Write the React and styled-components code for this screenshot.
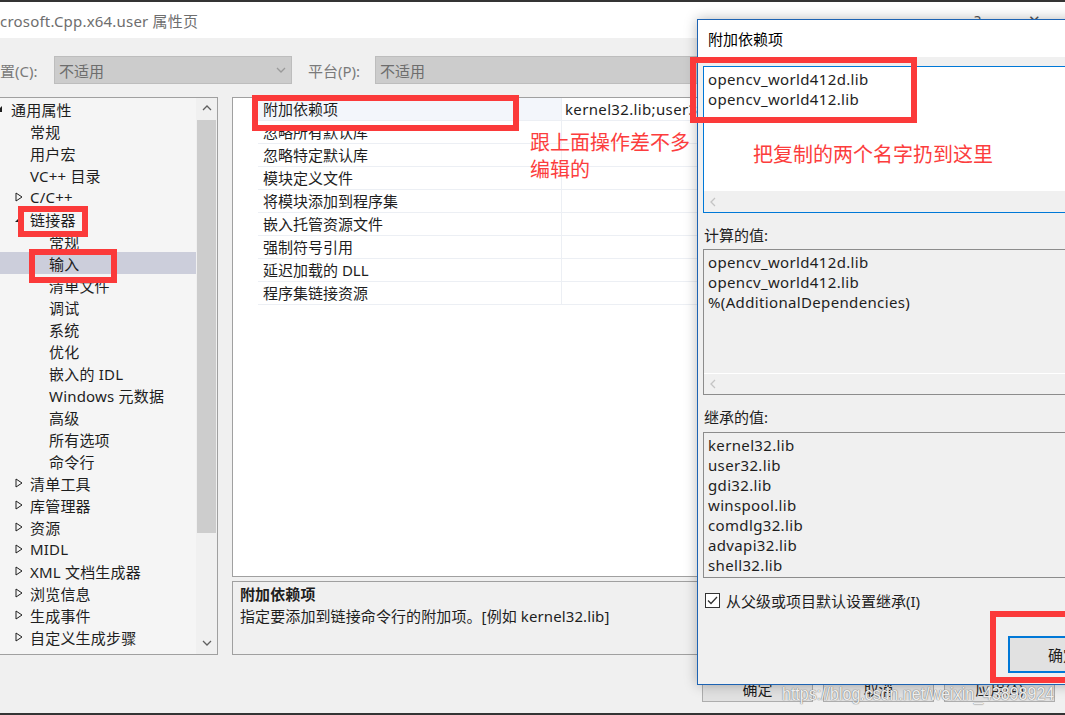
import React from "react";
import styled, { createGlobalStyle } from "styled-components";

const GlobalStyle = createGlobalStyle`
  html, body {
    margin: 0;
    padding: 0;
  }
  body {
    background: #2d2d30;
    overflow: hidden;
    font-family: "Noto Sans", "Noto Sans CJK SC", sans-serif;
  }
`;

const treeItems = [
  { label: "通用属性", level: 0, state: "open" },
  { label: "常规", level: 1 },
  { label: "用户宏", level: 1 },
  { label: "VC++ 目录", level: 1 },
  { label: "C/C++", level: 1, state: "closed" },
  { label: "链接器", level: 1, state: "open" },
  { label: "常规", level: 2 },
  { label: "输入", level: 2, selected: true },
  { label: "清单文件", level: 2 },
  { label: "调试", level: 2 },
  { label: "系统", level: 2 },
  { label: "优化", level: 2 },
  { label: "嵌入的 IDL", level: 2 },
  { label: "Windows 元数据", level: 2 },
  { label: "高级", level: 2 },
  { label: "所有选项", level: 2 },
  { label: "命令行", level: 2 },
  { label: "清单工具", level: 1, state: "closed" },
  { label: "库管理器", level: 1, state: "closed" },
  { label: "资源", level: 1, state: "closed" },
  { label: "MIDL", level: 1, state: "closed" },
  { label: "XML 文档生成器", level: 1, state: "closed" },
  { label: "浏览信息", level: 1, state: "closed" },
  { label: "生成事件", level: 1, state: "closed" },
  { label: "自定义生成步骤", level: 1, state: "closed" },
];

const gridRows = [
  { name: "附加依赖项", value: "kernel32.lib;user32.lib;gdi32.lib;winspool.lib", active: true },
  { name: "忽略所有默认库" },
  { name: "忽略特定默认库" },
  { name: "模块定义文件" },
  { name: "将模块添加到程序集" },
  { name: "嵌入托管资源文件" },
  { name: "强制符号引用" },
  { name: "延迟加载的 DLL" },
  { name: "程序集链接资源" },
];

const ownLibs = ["opencv_world412d.lib", "opencv_world412.lib"];
const computedLibs = [...ownLibs, "%(AdditionalDependencies)"];
const inheritedLibs = [
  "kernel32.lib",
  "user32.lib",
  "gdi32.lib",
  "winspool.lib",
  "comdlg32.lib",
  "advapi32.lib",
  "shell32.lib",
];

const ExpandedArrow = () => (
  <svg width="6" height="6" viewBox="0 0 6 6">
    <polygon points="6,0 6,6 0,6" fill="#1e1e1e" />
  </svg>
);

const CollapsedArrow = () => (
  <svg width="8" height="10" viewBox="0 0 8 10">
    <polygon points="1,1 7,5 1,9" fill="none" stroke="#1e1e1e" strokeWidth="1" />
  </svg>
);

const Chevron = ({ dir, color = "#606060", size = 10 }) => {
  const pts = {
    up: "1,6 5,2 9,6",
    down: "1,3 5,7 9,3",
    left: "6,1 2,5 6,9",
  }[dir];
  return (
    <svg width={size} height={size} viewBox="0 0 10 10">
      <polyline points={pts} fill="none" stroke={color} strokeWidth="1.3" />
    </svg>
  );
};

const CheckMark = () => (
  <svg width="13" height="13" viewBox="0 0 13 13">
    <polyline points="2,6.5 5,9.5 11,3" fill="none" stroke="#333" strokeWidth="1.3" />
  </svg>
);

export default function App() {
  return (
    <>
      <GlobalStyle />
      <Screen>
        <MainWindow>
          <TitleBar>
            <WindowTitle>crosoft.Cpp.x64.user 属性页</WindowTitle>
            <TitleButton>?</TitleButton>
            <TitleButton>✕</TitleButton>
          </TitleBar>

          <ConfigRow>
            <FieldLabel $w={54}>置(C):</FieldLabel>
            <Combo $w={238}>
              不适用
              <Chevron dir="down" color="#9a9a9a" />
            </Combo>
            <FieldLabel $w={67} $gap={16}>
              平台(P):
            </FieldLabel>
            <Combo $w={690}>
              不适用
              <Chevron dir="down" color="#9a9a9a" />
            </Combo>
          </ConfigRow>

          <Content>
            <Tree>
              <TreeList>
                {treeItems.map((item, i) => (
                  <TreeRow key={i} $level={item.level} $selected={item.selected}>
                    <Expander>
                      {item.state === "open" && <ExpandedArrow />}
                      {item.state === "closed" && <CollapsedArrow />}
                    </Expander>
                    {item.label}
                  </TreeRow>
                ))}
              </TreeList>
              <VScroll>
                <ScrollButton>
                  <Chevron dir="up" />
                </ScrollButton>
                <Thumb />
                <ScrollTrack />
                <ScrollButton>
                  <Chevron dir="down" />
                </ScrollButton>
              </VScroll>
            </Tree>

            <RightColumn>
              <Grid>
                {gridRows.map((row, i) => (
                  <GridRow key={i}>
                    <NameCell $active={row.active}>{row.name}</NameCell>
                    <ValueCell>{row.value}</ValueCell>
                  </GridRow>
                ))}
              </Grid>
              <Description>
                <DescTitle>附加依赖项</DescTitle>
                <div>指定要添加到链接命令行的附加项。[例如 kernel32.lib]</div>
              </Description>
            </RightColumn>
          </Content>

          <ButtonRow>
            <Button>确定</Button>
            <Button>取消</Button>
            <Button>应用(A)</Button>
          </ButtonRow>
        </MainWindow>

        <Dialog>
          <DialogTitle>附加依赖项</DialogTitle>
          <DialogBody>
            <TextBox $h={147} $focused>
              <Lines>
                {ownLibs.map((l) => (
                  <div key={l}>{l}</div>
                ))}
              </Lines>
              <HScroll $light>
                <Chevron dir="left" color="#c4c4c4" />
              </HScroll>
            </TextBox>

            <BoxLabel>计算的值:</BoxLabel>
            <TextBox $h={146}>
              <Lines>
                {computedLibs.map((l) => (
                  <div key={l}>{l}</div>
                ))}
              </Lines>
              <HScroll>
                <Chevron dir="left" color="#c4c4c4" />
              </HScroll>
            </TextBox>

            <BoxLabel $after={5}>继承的值:</BoxLabel>
            <TextBox $h={146}>
              <Lines>
                {inheritedLibs.map((l) => (
                  <div key={l}>{l}</div>
                ))}
              </Lines>
            </TextBox>

            <CheckRow>
              <CheckBox>
                <CheckMark />
              </CheckBox>
              从父级或项目默认设置继承(I)
            </CheckRow>

            <DialogFooter>
              <Button $primary $w={110} $h={37}>
                确定
              </Button>
              <Button $w={110} $h={37}>
                取消
              </Button>
            </DialogFooter>
          </DialogBody>
        </Dialog>

        <RedBox $x={18} $y={206} $w={70} $h={31} />
        <RedBox $x={29} $y={249} $w={88} $h={34} />
        <RedBox $x={252} $y={95} $w={267} $h={36} />
        <RedBox $x={690} $y={57} $w={227} $h={66} />
        <RedBox $x={990} $y={611} $w={90} $h={72} />

        <RedNote $x={530} $y={129}>
          跟上面操作差不多
          <br />
          编辑的
        </RedNote>
        <RedNote $x={753} $y={141}>
          把复制的两个名字扔到这里
        </RedNote>

        <Watermark>https://blog.csdn.net/weixin_43898924</Watermark>
      </Screen>
    </>
  );
}

const Screen = styled.div`
  position: relative;
  width: 1065px;
  height: 715px;
  overflow: hidden;
  box-sizing: border-box;
  padding-top: 2px;
  background: #343434;
`;

const MainWindow = styled.div`
  display: flex;
  flex-direction: column;
  height: 711px;
  background: #f0f0f0;
  font-size: 15px;
  color: #1e1e1e;
`;

const TitleBar = styled.div`
  display: flex;
  align-items: center;
  height: 36px;
  flex-shrink: 0;
  background: #ffffff;
  padding-right: 2px;
`;

const WindowTitle = styled.div`
  flex: 1;
  color: #6e6e6e;
  font-size: 15px;
  letter-spacing: 0.2px;
`;

const TitleButton = styled.div`
  width: 57px;
  text-align: center;
  color: #555;
  font-size: 15px;
`;

const ConfigRow = styled.div`
  display: flex;
  align-items: center;
  height: 28px;
  margin-top: 18px;
  flex-shrink: 0;
`;

const FieldLabel = styled.span`
  flex-shrink: 0;
  width: ${(p) => p.$w}px;
  margin-left: ${(p) => p.$gap || 0}px;
  color: #7a7a7a;
`;

const Combo = styled.div`
  flex-shrink: 0;
  box-sizing: border-box;
  width: ${(p) => p.$w}px;
  height: 28px;
  display: flex;
  align-items: center;
  justify-content: space-between;
  padding: 0 5px 0 4px;
  background: #cccccc;
  border: 1px solid #bdbdbd;
  color: #6d6d6d;
`;

const Content = styled.div`
  display: flex;
  gap: 14px;
  height: 558px;
  margin-top: 13px;
  flex-shrink: 0;
`;

const Tree = styled.div`
  display: flex;
  width: 219px;
  margin-left: -1px;
  box-sizing: border-box;
  border: 1px solid #a0a0a0;
  background: #f5f5f5;
  flex-shrink: 0;
`;

const TreeList = styled.div`
  flex: 1;
  overflow: hidden;
`;

const TreeRow = styled.div`
  display: flex;
  align-items: center;
  height: 22px;
  padding-left: ${(p) => p.$level * 19}px;
  background: ${(p) => (p.$selected ? "#cccedb" : "transparent")};
  white-space: nowrap;
  letter-spacing: 0.2px;
`;

const Expander = styled.span`
  display: flex;
  align-items: center;
  width: 11px;
  flex-shrink: 0;
  svg {
    margin-left: -4px;
  }
`;

const VScroll = styled.div`
  width: 21px;
  display: flex;
  flex-direction: column;
  background: #f0f0f0;
`;

const ScrollButton = styled.div`
  height: 22px;
  display: flex;
  align-items: center;
  justify-content: center;
`;

const Thumb = styled.div`
  height: 413px;
  margin: 0 1px;
  background: #cdcdcd;
`;

const ScrollTrack = styled.div`
  flex: 1;
`;

const RightColumn = styled.div`
  flex: 1;
  display: flex;
  flex-direction: column;
  gap: 4px;
  padding-right: 10px;
`;

const Grid = styled.div`
  height: 480px;
  box-sizing: border-box;
  border: 1px solid #a0a0a0;
  background: #ffffff;
  padding-left: 25px;
`;

const GridRow = styled.div`
  display: grid;
  grid-template-columns: 304px 1fr;
  height: 23px;
  box-sizing: border-box;
  border-bottom: 1px solid #eceff4;
  line-height: 22px;
  white-space: nowrap;
`;

const NameCell = styled.div`
  padding-left: 5px;
  border-right: 1px solid #eceff4;
  background: ${(p) => (p.$active ? "#f3f6fb" : "transparent")};
`;

const ValueCell = styled.div`
  padding-left: 3px;
  overflow: hidden;
  letter-spacing: 0.35px;
`;

const Description = styled.div`
  flex: 1;
  box-sizing: border-box;
  border: 1px solid #a0a0a0;
  padding: 1px 7px;
  line-height: 22px;
  letter-spacing: 0.1px;
`;

const DescTitle = styled.div`
  font-weight: bold;
`;

const ButtonRow = styled.div`
  display: flex;
  justify-content: flex-end;
  gap: 10px;
  margin-top: 20px;
  padding-right: 10px;
`;

const Button = styled.div`
  flex-shrink: 0;
  box-sizing: border-box;
  width: ${(p) => p.$w || 111}px;
  height: ${(p) => p.$h || 27}px;
  display: flex;
  align-items: center;
  justify-content: center;
  background: #e1e1e1;
  border: ${(p) => (p.$primary ? "2px solid #0078d7" : "1px solid #adadad")};
  color: #1e1e1e;
  font-size: 15px;
`;

const Dialog = styled.div`
  position: absolute;
  left: 697px;
  top: 19px;
  width: 390px;
  height: 666px;
  box-sizing: border-box;
  display: flex;
  flex-direction: column;
  border: 1px solid #1d63b3;
  background: #f0f0f0;
  box-shadow: 0 0 12px rgba(0, 0, 0, 0.28);
  font-size: 15px;
  color: #1e1e1e;
`;

const DialogTitle = styled.div`
  height: 37px;
  display: flex;
  align-items: center;
  padding-left: 10px;
  background: #ffffff;
  color: #000;
`;

const DialogBody = styled.div`
  display: flex;
  flex-direction: column;
  padding: 9px 0 0 5px;
`;

const TextBox = styled.div`
  display: flex;
  flex-direction: column;
  width: 380px;
  height: ${(p) => p.$h}px;
  box-sizing: border-box;
  border: 1px solid ${(p) => (p.$focused ? "#0078d7" : "#8c8c8c")};
  background: ${(p) => (p.$focused ? "#ffffff" : "#f0f0f0")};
`;

const Lines = styled.div`
  flex: 1;
  padding: 2px 4px;
  line-height: 20px;
  white-space: nowrap;
  letter-spacing: 0.35px;
`;

const HScroll = styled.div`
  height: 20px;
  display: flex;
  align-items: center;
  padding-left: 5px;
  background: #f0f0f0;
  border-top: 1px solid ${(p) => (p.$light ? "#f0f0f0" : "#ffffff")};
`;

const BoxLabel = styled.div`
  padding: 12px 0 ${(p) => p.$after || 4}px 1px;
  line-height: 20px;
`;

const CheckRow = styled.div`
  display: flex;
  align-items: center;
  gap: 6px;
  margin: 15px 0 0 2px;
  height: 15px;
`;

const CheckBox = styled.span`
  width: 15px;
  height: 15px;
  box-sizing: border-box;
  border: 1px solid #333;
  background: #fff;
  display: flex;
  align-items: center;
  justify-content: center;
`;

const DialogFooter = styled.div`
  display: flex;
  gap: 10px;
  margin-top: 28px;
  padding-left: 305px;
`;

const RedBox = styled.div`
  position: absolute;
  left: ${(p) => p.$x}px;
  top: ${(p) => p.$y}px;
  width: ${(p) => p.$w}px;
  height: ${(p) => p.$h}px;
  box-sizing: border-box;
  border: 6px solid #fb3a3a;
  pointer-events: none;
`;

const RedNote = styled.div`
  position: absolute;
  left: ${(p) => p.$x}px;
  top: ${(p) => p.$y}px;
  font-size: 20px;
  line-height: 27px;
  color: #fc3d3d;
  white-space: nowrap;
`;

const Watermark = styled.div`
  position: absolute;
  left: 782px;
  top: 683px;
  font-family: "Liberation Sans", Arial, sans-serif;
  font-size: 16px;
  line-height: 22px;
  transform: scaleY(1.15);
  transform-origin: left center;
  color: rgba(255, 255, 255, 0.88);
  text-shadow: 0 0 1px #7a7a7a, 0 0 1px #7a7a7a;
  white-space: nowrap;
`;
